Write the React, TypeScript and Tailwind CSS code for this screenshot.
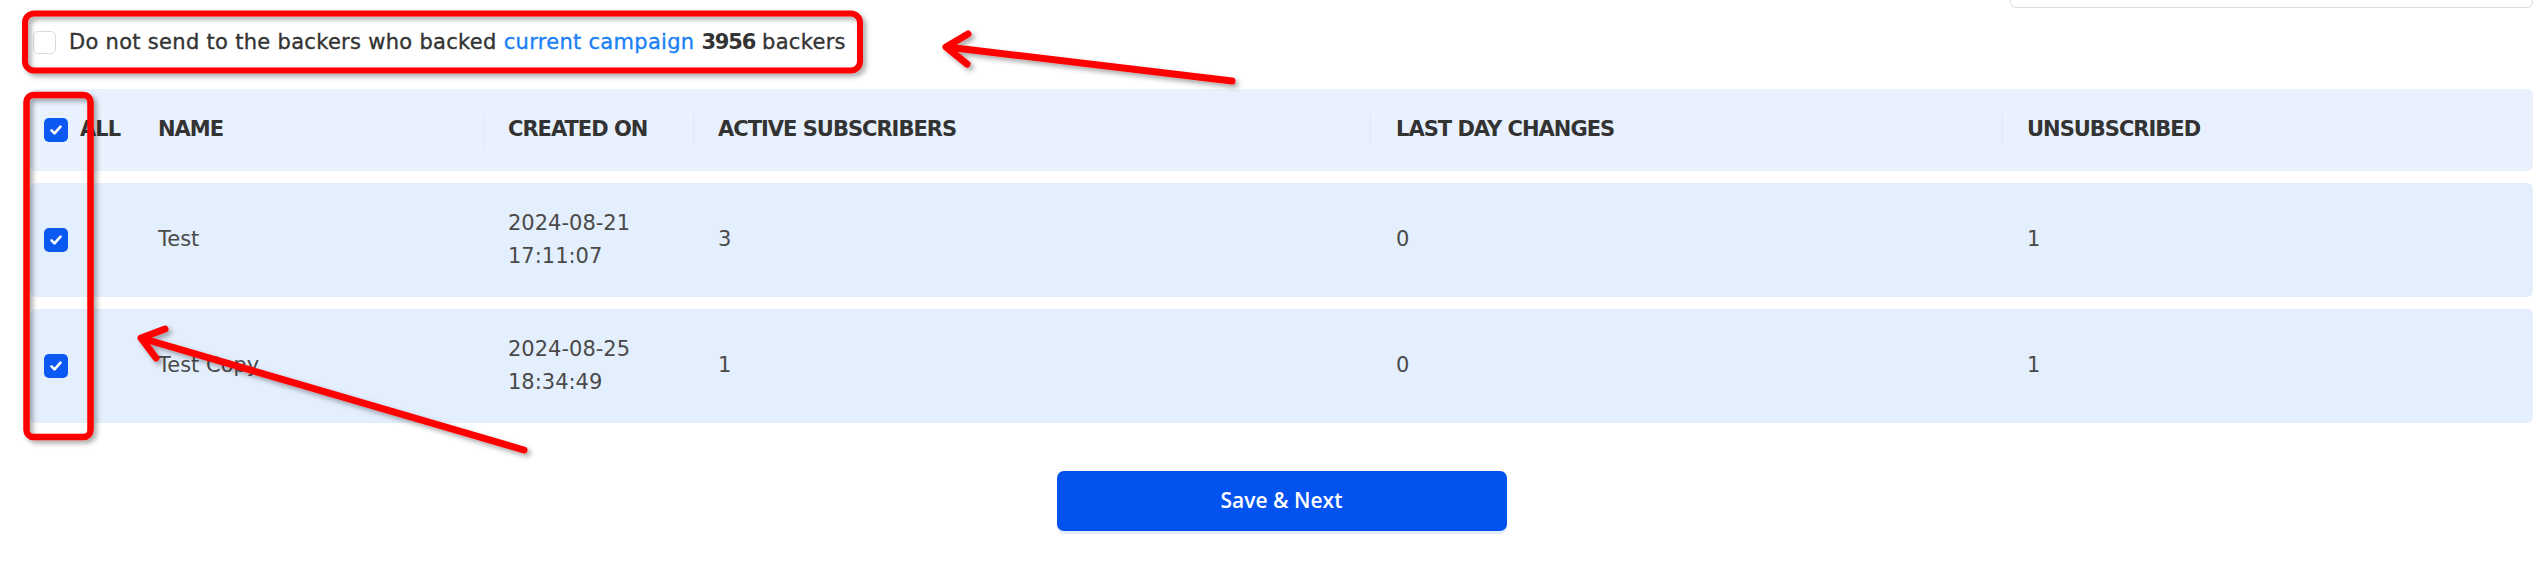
import React from "react";

const FONT = { fontFamily: '"DejaVu Sans", "Liberation Sans", sans-serif' };

function CheckedBox() {
  return (
    <div className="flex h-[24px] w-[24px] shrink-0 items-center justify-center rounded-[5px] bg-[#0b58f3]">
      <svg width="16" height="16" viewBox="0 0 16 16" fill="none">
        <path d="M3.5 8.3l3 3 6-6.6" stroke="white" strokeWidth="2.6" strokeLinecap="round" strokeLinejoin="round" />
      </svg>
    </div>
  );
}

function Sep() {
  return <div className="h-[35px] w-px shrink-0 bg-[#dfe8f3]" />;
}

const rows = [
  { name: "Test", date: "2024-08-21", time: "17:11:07", active: "3", last: "0", unsub: "1" },
  { name: "Test Copy", date: "2024-08-25", time: "18:34:49", active: "1", last: "0", unsub: "1" },
];

const GRID = "grid grid-cols-[113px_340px_210px_677px_632px_1fr]";

export default function App() {
  return (
    <div className="relative h-[580px] w-[2536px] overflow-hidden bg-white text-[21px]" style={FONT}>
      {/* top-right card remnant */}
      <div className="flex justify-end pr-[3px]">
        <div className="h-[8px] w-[523px] rounded-b-[6px] border border-t-0 border-[#dedede]" />
      </div>

      {/* exclusion checkbox */}
      <div className="mt-[23px] flex items-center pl-[33px]">
        <div className="h-[23px] w-[23px] rounded-[5px] border border-[#dadada] bg-white" />
        <div className="ml-[13px] whitespace-nowrap leading-[23px] tracking-[0.3px] text-[#333333] [-webkit-text-stroke:0.35px_currentColor]">
          Do not send to the backers who backed{" "}
          <span className="text-[#1b7ff5]">current campaign</span>{" "}
          <span className="font-bold tracking-[-1.2px] [-webkit-text-stroke:0px]">3956</span> backers
        </div>
      </div>

      {/* table */}
      <div className="mt-[35px] pl-[30px] pr-[3px]">
        <div className="flex flex-col gap-[12px]">
          <div className={`${GRID} h-[82px] items-center rounded-[6px] bg-[#e8f1fd] font-bold tracking-[-1px] text-[#333333]`}>
            <div className="flex items-center gap-[12px] pl-[14px]">
              <CheckedBox />
              <span>ALL</span>
            </div>
            <div className="pl-[15px]">NAME</div>
            <div className="flex items-center">
              <Sep />
              <span className="ml-[24px]">CREATED ON</span>
            </div>
            <div className="flex items-center">
              <Sep />
              <span className="ml-[24px]">ACTIVE SUBSCRIBERS</span>
            </div>
            <div className="flex items-center">
              <Sep />
              <span className="ml-[25px]">LAST DAY CHANGES</span>
            </div>
            <div className="flex items-center">
              <Sep />
              <span className="ml-[24px]">UNSUBSCRIBED</span>
            </div>
          </div>

          {rows.map((r) => (
            <div key={r.name} className={`${GRID} h-[114px] items-center rounded-[6px] bg-[#e4effd] text-[#4a4a4a]`}>
              <div className="pl-[14px]">
                <CheckedBox />
              </div>
              <div className="pl-[15px]">{r.name}</div>
              <div className="pl-[25px] leading-[33px]">
                <div>{r.date}</div>
                <div>{r.time}</div>
              </div>
              <div className="pl-[25px]">{r.active}</div>
              <div className="pl-[26px]">{r.last}</div>
              <div className="pl-[25px]">{r.unsub}</div>
            </div>
          ))}
        </div>

        <div className="mt-[48px] flex justify-center">
          <button
            className="flex h-[60px] w-[450px] items-center justify-center rounded-[7px] bg-[#0152ef] text-[21px] font-semibold text-white shadow-[0_3px_0_#e3edfd]"
            style={{ fontFamily: '"Open Sans", "Noto Sans", sans-serif' }}
          >
            Save &amp; Next
          </button>
        </div>
      </div>

      {/* red annotations overlay */}
      <svg className="pointer-events-none absolute left-0 top-0" width="2536" height="580" viewBox="0 0 2536 580">
        <defs>
          <filter id="sh" x="-10%" y="-10%" width="120%" height="120%">
            <feDropShadow dx="3" dy="3" stdDeviation="2.5" floodColor="#000" floodOpacity="0.35" />
          </filter>
        </defs>
        <g filter="url(#sh)" stroke="#ff0000" fill="none" strokeLinecap="round" strokeLinejoin="round">
          <rect x="25" y="13.5" width="835" height="57" rx="9" strokeWidth="6" />
          <rect x="26.5" y="95" width="64" height="342" rx="7" strokeWidth="6.5" />
          <path d="M1232 81 L947 47 M968 34 L946 47 L967 64" strokeWidth="7" />
          <path d="M524 450 L141 338 M165 329 L141 338 L156 358" strokeWidth="7" />
        </g>
      </svg>
    </div>
  );
}
